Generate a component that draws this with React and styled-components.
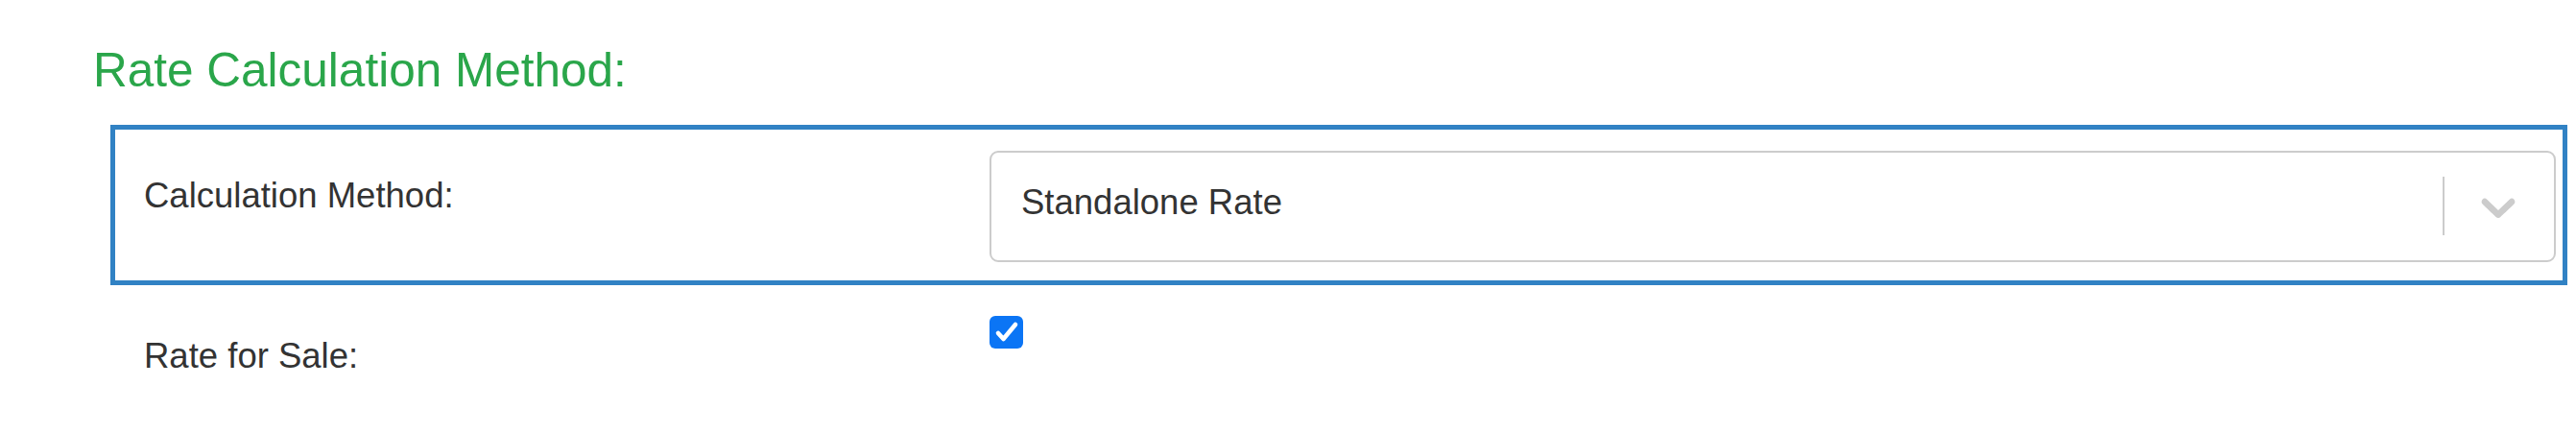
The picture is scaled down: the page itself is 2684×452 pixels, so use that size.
import React from "react";
import styled, { createGlobalStyle } from "styled-components";

const Global = createGlobalStyle`
  html, body { margin: 0; padding: 0; background: #fff; }
  body { font-family: "Liberation Sans", Arial, sans-serif; color: #333; }
`;

const Page = styled.div`
  width: 2684px;
  height: 452px;
  padding-top: 45px;
  box-sizing: border-box;
  overflow: hidden;
`;

const Heading = styled.h3`
  margin: 0 0 29px 97px;
  font-size: 49.5px;
  line-height: 56px;
  font-weight: 400;
  color: #2aa64a;
`;

const Form = styled.div`
  margin: 0 9px 0 115px;
  display: flex;
  flex-direction: column;
`;

const Row = styled.div`
  display: grid;
  grid-template-columns: 881px 1fr;
  align-items: start;
  padding: 22px 7px 19px 30px;
  border: 5px solid ${(p) => (p.$highlight ? "#3182c4" : "transparent")};
`;

const Label = styled.label`
  font-size: 36.5px;
  line-height: 54px;
  padding-top: 20px;
  color: #333;
`;

const Control = styled.div`
  height: 116px;
  box-sizing: border-box;
  border: 2px solid #cccccc;
  border-radius: 9px;
  display: flex;
  align-items: center;
  background: #fff;
`;

const Value = styled.div`
  flex: 1;
  padding: 0 0 9px 31px;
  font-size: 36.5px;
  line-height: 44px;
  color: #333;
`;

const Separator = styled.span`
  align-self: center;
  width: 2px;
  height: 61px;
  margin-bottom: 2px;
  background: #cccccc;
`;

const Indicator = styled.div`
  width: 114px;
  display: flex;
  align-items: center;
  justify-content: center;
  color: #cccccc;
  svg { display: block; margin-left: -2px; }
`;

const CheckBox = styled.span`
  margin-top: 5px;
  width: 35px;
  height: 34px;
  border-radius: 6px;
  background: #0b75f5;
  display: flex;
  align-items: center;
  justify-content: center;
`;

const Chevron = () => (
  <svg width="60" height="60" viewBox="0 0 20 20" fill="currentColor" aria-hidden="true">
    <path d="M4.516 7.548c0.436-0.446 1.043-0.481 1.576 0l3.908 3.747 3.908-3.747c0.533-0.481 1.141-0.446 1.574 0 0.436 0.445 0.408 1.197 0 1.615-0.406 0.418-4.695 4.502-4.695 4.502-0.217 0.223-0.502 0.335-0.787 0.335s-0.57-0.112-0.789-0.335c0 0-4.287-4.084-4.695-4.502s-0.436-1.17 0-1.615z" />
  </svg>
);

const Check = () => (
  <svg width="28" height="28" viewBox="0 0 28 28" fill="none" aria-hidden="true">
    <path d="M5 15 L10.5 21 L23 6" stroke="#fff" strokeWidth="4.6" strokeLinecap="round" strokeLinejoin="round" />
  </svg>
);

export default function App() {
  return (
    <Page>
      <Global />
      <Heading>Rate Calculation Method:</Heading>
      <Form>
        <Row $highlight>
          <Label>Calculation Method:</Label>
          <Control>
            <Value>Standalone Rate</Value>
            <Separator />
            <Indicator>
              <Chevron />
            </Indicator>
          </Control>
        </Row>
        <Row>
          <Label>Rate for Sale:</Label>
          <CheckBox role="checkbox" aria-checked="true">
            <Check />
          </CheckBox>
        </Row>
      </Form>
    </Page>
  );
}
